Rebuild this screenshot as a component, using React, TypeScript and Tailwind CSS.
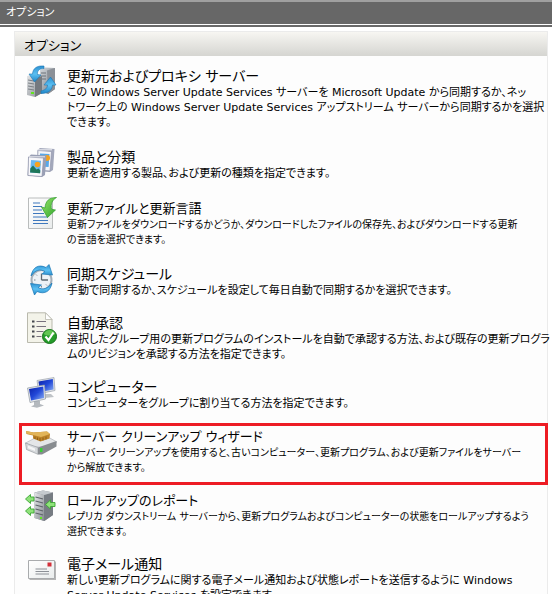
import type { ReactNode } from "react";

type Option = {
  title: string;
  lines: string[];
  icon: ReactNode;
  spacing: string;
  dense?: boolean;
  highlighted?: boolean;
};

function Defs() {
  return (
    <svg className="absolute size-0" aria-hidden="true">
      <defs>
        <linearGradient id="steel" x1="0" y1="0" x2="1" y2="1">
          <stop offset="0" stopColor="#d4d8dc" />
          <stop offset="0.5" stopColor="#a3a8ae" />
          <stop offset="1" stopColor="#676c73" />
        </linearGradient>
        <linearGradient id="front" x1="0" y1="0" x2="1" y2="1">
          <stop offset="0" stopColor="#e6e8ea" />
          <stop offset="1" stopColor="#858a90" />
        </linearGradient>
        <linearGradient id="blue" x1="0" y1="0" x2="0" y2="1">
          <stop offset="0" stopColor="#2a8fd0" />
          <stop offset="0.5" stopColor="#5cc0f2" />
          <stop offset="1" stopColor="#1f86c8" />
        </linearGradient>
        <linearGradient id="green" x1="0" y1="0" x2="1" y2="1">
          <stop offset="0" stopColor="#9be86a" />
          <stop offset="1" stopColor="#2fa32c" />
        </linearGradient>
        <linearGradient id="screen" x1="0" y1="0" x2="1" y2="1">
          <stop offset="0" stopColor="#0a1fa8" />
          <stop offset="0.5" stopColor="#2248d8" />
          <stop offset="1" stopColor="#8fb4f4" />
        </linearGradient>
        <linearGradient id="paper" x1="0" y1="0" x2="1" y2="1">
          <stop offset="0" stopColor="#ffffff" />
          <stop offset="1" stopColor="#e9ecec" />
        </linearGradient>
      </defs>
    </svg>
  );
}

function Icon({ children }: { children: ReactNode }) {
  return (
    <svg viewBox="0 0 32 32" className="-mt-[3px] size-8 shrink-0" fill="none" aria-hidden="true">
      {children}
    </svg>
  );
}

const syncSourceIcon = (
  <Icon>
    <path d="M15 5 20 2.500 30 3v21l-7 5-8-3z" fill="url(#steel)" />
    <path d="M22 5.500 30 3v21l-7 5z" fill="#8b9097" />
    <path d="M16 8h5M16 11h5M16 14h5" stroke="#6d7278" />
    <path d="M2 11l8-2 7 2v17l-7 4-8-2z" fill="url(#front)" />
    <path d="M10 13l7-2v17l-7 4z" fill="#74797f" />
    <path d="M3 15l6 1M3 18l6 1M3 21l6 1M3 24l6 1" stroke="#7b8086" />
    <rect x="6" y="27" width="3" height="2" fill="#62e31f" />
    <path d="M19 1C12 .5 8 3 7.500 9L4 9l5.500 8L16 10l-3.500-.5C12 6 14 3.500 19 3.500z" fill="url(#blue)" stroke="#1d76b4" strokeWidth=".6" />
    <path d="M16 28.500c6 0 11-2 11.500-8.500H31l-5.500-8-6.500 8h3.500c0 3-2 5-6.500 6z" fill="url(#blue)" stroke="#1d76b4" strokeWidth=".6" />
  </Icon>
);

const productsIcon = (
  <Icon>
    <path d="M12.500 4 15 2l14.500 1-1.500 21-3 2-12-1z" fill="#a3a8bb" />
    <path d="M13 4.500 26.500 5.500 25 25l-13-1z" fill="#f4f5f8" stroke="#9297ad" strokeWidth=".7" />
    <path d="M15 7.500l9.500.6-.9 13-9.500-.6z" fill="#58a8e8" />
    <circle cx="22" cy="12" r="3" fill="#f5a21c" />
    <path d="M3.500 11 6 8.500 21.500 9.500 20 29l-3 2-14.500-1.500z" fill="#999fb5" />
    <path d="M3.500 11 18.500 12 17 30.500l-14-1z" fill="#f7f7fa" stroke="#8c91a8" strokeWidth=".7" />
    <path d="M6 14l10 .7-.9 12.500-10-.7z" fill="#69b8f0" />
    <circle cx="12.500" cy="18.500" r="2.800" fill="#f7a21b" />
    <path d="M5.300 22.500 8 19.500l3.500 4 2-1 1.800 2-.2 2.700-10-.7z" fill="#1e7659" />
    <path d="M4 10.800h16M13 3.800h14" stroke="#fff" strokeWidth=".8" />
  </Icon>
);

const filesIcon = (
  <Icon>
    <path d="M3.500 1h24v30.500h-24z" fill="url(#paper)" stroke="#b9bcbc" />
    <path d="M8 6h7M8 9.500h9M8 13h9M8 16.500h11M8 20h15M8 23.500h15M8 26.500h15" stroke="#3e78bd" strokeWidth="1.200" />
    <path d="M31.500.5C24 .5 20.500 4 20 11l-3.500-1 6 10.500L30.500 13l-4-.8C25.500 7 27 3 31.500.5z" fill="url(#green)" stroke="#2d9b2a" strokeWidth=".7" />
  </Icon>
);

const scheduleIcon = (
  <Icon>
    <circle cx="16.500" cy="17" r="10" fill="#edf2f6" stroke="#a4afb8" strokeWidth="2" />
    <path d="M16.500 17V10.500M16.500 17H23" stroke="#5d6972" strokeWidth="1.300" />
    <path d="M9 17h1.500M16.500 23v1.500M11 11.500l1 1M22 22.500l-1-1" stroke="#7c8790" />
    <path d="M6 13C7.500 5 13 .5 21 4.500L24 1.500 27.500 12 17 11l3-2.500C14.500 5.500 10.500 7 6 13z" fill="url(#blue)" stroke="#1976b4" strokeWidth=".7" />
    <path d="M27 20C25.500 28 20 32 12 28.500L9.500 32 5.500 20.500 16.500 22l-3.500 2.500C18.500 27.500 22.500 25.500 27 20z" fill="url(#blue)" stroke="#1976b4" strokeWidth=".7" />
  </Icon>
);

const approvalIcon = (
  <Icon>
    <path d="M2.500.8h18L27 7.500V30.500H2.500z" fill="#f3f3e9" stroke="#b9b9ad" />
    <path d="M20.500.8v6.700H27z" fill="#fff" stroke="#b9b9ad" strokeWidth=".8" />
    <path d="M7 9.500h2.500M7 14.500h2.500M7 19.500h2.500M7 24.500h2.500" stroke="#43464c" strokeWidth="2.200" />
    <path d="M11.500 9.500h9.500M11.500 14.500h9.500M11.500 19.500h7M11.500 24.500h5" stroke="#77717d" strokeWidth="1.100" />
    <circle cx="24.500" cy="24.500" r="7" fill="#259c2a" stroke="#147219" />
    <path d="M18.800 22c2-5.500 9.500-5.500 11.500 0-3 2-8 2-11.500 0z" fill="#62c552" />
    <path d="M20.500 24.500l3 3.500 5-7.500" stroke="#fff" strokeWidth="2.200" />
  </Icon>
);

const computersIcon = (
  <Icon>
    <path d="M19 18h7l3 3-9 1z" fill="#bfc3c7" />
    <path d="M12 4.500 29 1.500 30 14.500 14 18z" fill="#dfe2e6" stroke="#9ea5ad" strokeWidth=".7" />
    <path d="M13.500 5.500 27.800 3l.8 10.500L15 16z" fill="url(#screen)" />
    <path d="M9 25h6v3l4 1.500-7 2.300-6-1.300 3-1.500z" fill="#b4b9be" />
    <path d="M2.500 12 19.500 9l1 14L5 26.500z" fill="#e4e7ea" stroke="#9199a2" strokeWidth=".7" />
    <path d="M4 13l14.300-2.500.8 11.500L6 24.500z" fill="url(#screen)" />
  </Icon>
);

const cleanupIcon = (
  <Icon>
    <path d="M.5 18 12 12h11l9 5-9 5H8z" fill="#e4e6e8" stroke="#a8adb1" strokeWidth=".6" />
    <path d="M.5 18 13 22.500v6.800L1.500 24.500z" fill="#d6d9dc" stroke="#8b9096" strokeWidth=".6" />
    <path d="M13 22.500 31.500 16v5.500L17 29.500h-4z" fill="#888c90" />
    <path d="M3 20.500l7 3v2.500l-7-2.800z" fill="#f4f5f6" />
    <rect x="15" y="23" width="2.500" height="4" fill="#39cf36" />
    <path d="M1 6 8.500 7.500 22 6.500 25 9l-.5 4.500-9 3-7.500-3V10.500L1.500 9z" fill="#bd8429" />
    <path d="M1 6 8.500 7.500 22 6.500 25 9l-9 3-8-2L1.500 8.500z" fill="#e2b458" />
    <path d="M10 11.500v2.500M12.500 12.500v2.500M15 13V16M18 12.500v3M21 11.500v3" stroke="#855713" strokeWidth=".8" />
  </Icon>
);

const rollupIcon = (
  <Icon>
    <path d="M9.500 3.500 18 1.500l10 2V26l-8.500 6-10-3z" fill="#8b9097" />
    <path d="M9.500 3.500 19 6v26l-9.500-3z" fill="url(#front)" />
    <path d="M19 6l9-2.500V26l-9 6z" fill="#777c83" />
    <path d="M9.500 3.500 18 1.500l10 2L19 6z" fill="#c6cacf" />
    <path d="M10.500 8l7.500 2M10.500 12l7.500 2M10.500 16l7.500 2M10.500 20l7.500 2M10.500 24l7.500 2" stroke="#5e6369" strokeWidth="1.100" />
    <rect x="15" y="28" width="2" height="2" fill="#62e31f" />
    <path d="M.5 10 5.500 5.500V8H9v4H5.500v2.500zM.5 22l5-4.500V20H9v4H5.500v2.500zM20.500 15.500l5-4.500v2.500H30v4h-4.500V20z" fill="#8fe27a" stroke="#3aa632" strokeWidth=".9" />
  </Icon>
);

const mailIcon = (
  <Icon>
    <path d="M4.500 8.500H31v18.500H4.500z" fill="#b5b5b5" />
    <path d="M3.500 7.500H29.500v18H3.500z" fill="url(#paper)" stroke="#a9abad" />
    <rect x="22.500" y="9.500" width="4" height="4" fill="#d3303a" />
    <path d="M10.500 16h11.500M10.500 18.500h13.500M10.500 21h13.500" stroke="#8c9096" />
  </Icon>
);

const options: Option[] = [
  {
    title: "更新元およびプロキシ サーバー",
    lines: [
      "この Windows Server Update Services サーバーを Microsoft Update から同期するか、ネッ",
      "トワーク上の Windows Server Update Services アップストリーム サーバーから同期するかを選択",
      "できます。",
    ],
    icon: syncSourceIcon,
    spacing: "pb-[19px]",
  },
  {
    title: "製品と分類",
    lines: ["更新を適用する製品、および更新の種類を指定できます。"],
    icon: productsIcon,
    spacing: "pb-[19px]",
  },
  {
    title: "更新ファイルと更新言語",
    lines: [
      "更新ファイルをダウンロードするかどうか、ダウンロードしたファイルの保存先、およびダウンロードする更新",
      "の言語を選択できます。",
    ],
    icon: filesIcon,
    spacing: "pb-[19px]",
    dense: true,
  },
  {
    title: "同期スケジュール",
    lines: ["手動で同期するか、スケジュールを設定して毎日自動で同期するかを選択できます。"],
    icon: scheduleIcon,
    spacing: "pb-[17px]",
  },
  {
    title: "自動承認",
    lines: [
      "選択したグループ用の更新プログラムのインストールを自動で承認する方法、および既存の更新プログラ",
      "ムのリビジョンを承認する方法を指定できます。",
    ],
    icon: approvalIcon,
    spacing: "pb-[17px]",
  },
  {
    title: "コンピューター",
    lines: ["コンピューターをグループに割り当てる方法を指定できます。"],
    icon: computersIcon,
    spacing: "pb-[17px]",
  },
  {
    title: "サーバー クリーンアップ ウィザード",
    lines: [
      "サーバー クリーンアップを使用すると、古いコンピューター、更新プログラム、および更新ファイルをサーバー",
      "から解放できます。",
    ],
    icon: cleanupIcon,
    spacing: "pb-[17px]",
    dense: true,
    highlighted: true,
  },
  {
    title: "ロールアップのレポート",
    lines: [
      "レプリカ ダウンストリーム サーバーから、更新プログラムおよびコンピューターの状態をロールアップするよう",
      "選択できます。",
    ],
    icon: rollupIcon,
    spacing: "pb-[17px]",
    dense: true,
  },
  {
    title: "電子メール通知",
    lines: [
      "新しい更新プログラムに関する電子メール通知および状態レポートを送信するように Windows",
      "Server Update Services を設定できます。",
    ],
    icon: mailIcon,
    spacing: "pb-[17px]",
  },
];

function OptionRow({ option }: { option: Option }) {
  const titleSize = option.dense ? "text-[13px]" : "text-[14px]";
  const bodySize = option.dense ? "text-[10px]" : "text-[11px]";

  return (
    <li className={`relative flex gap-[10px] ${option.spacing}`}>
      {option.icon}
      <div className="min-w-0 flex-1">
        <h2 className={`${titleSize} leading-[17px]`}>
          <a href="#">{option.title}</a>
        </h2>
        <p className={`${bodySize} leading-[15px] whitespace-nowrap`}>
          {option.lines.map((line) => (
            <span key={line} className="block">
              {line}
            </span>
          ))}
        </p>
      </div>
      {option.highlighted && (
        <div className="pointer-events-none absolute -top-[5px] -right-px bottom-[7px] -left-[6px] border-3 border-[#ed1c24]" />
      )}
    </li>
  );
}

export default function App() {
  return (
    <div className="h-screen overflow-hidden bg-white font-['DejaVu_Sans','Noto_Sans_CJK_JP',sans-serif] text-black [font-feature-settings:'palt']">
      <Defs />
      <header className="border-t-2 border-[#a0a0a0] bg-white">
        <h1 className="h-[22px] bg-[#676767] pl-[6px] text-[11px] leading-[22px] text-white">オプション</h1>
        <div className="mt-px h-[2px] bg-[#696969]" />
      </header>
      <main className="mt-1 mr-1 ml-[14px] border border-[#ebebeb] bg-[#fdfdfd]">
        <h2 className="h-6 bg-linear-to-b from-[#f7f6f2] to-[#d5d5d1] pl-[9px] text-[13px] leading-[27px]">オプション</h2>
        <ul className="pt-3 pl-[10px]">
          {options.map((option) => (
            <OptionRow key={option.title} option={option} />
          ))}
        </ul>
      </main>
    </div>
  );
}
